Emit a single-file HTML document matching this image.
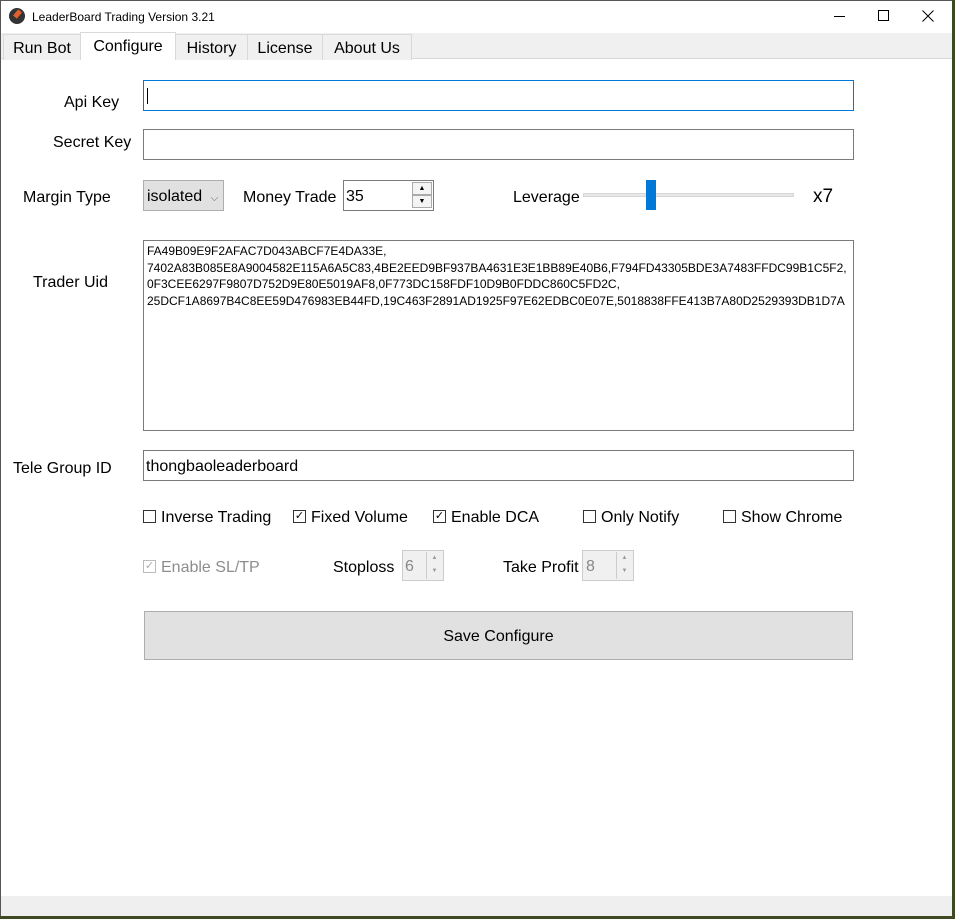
<!DOCTYPE html>
<html><head><meta charset="utf-8"><style>
*{margin:0;padding:0;box-sizing:border-box}
body{width:955px;height:919px;overflow:hidden;background:#3d4a22;font-family:"Liberation Sans",sans-serif;position:relative;color:#000}
.a{position:absolute}
.win{left:0;top:0;width:952px;height:916px;background:#fff;border-left:1px solid #555;border-top:1px solid #555}
.lbl{font-size:16px;white-space:nowrap;margin-top:2px}
.inp{border:1px solid #7a7a7a;background:#fff}
.cb{width:13px;height:13px;border:1px solid #333;background:#fff;font-size:11px;line-height:11px;text-align:center;margin-top:1px}
.tab{top:34px;height:26px;border:1px solid #d9d9d9;border-bottom:none;background:#f0f0f0;font-size:16px;text-align:center;line-height:28px}
</style></head><body>
<div class="a win"></div>
<!-- title -->
<div class="a" style="left:9px;top:8px;width:16px;height:16px;border-radius:50%;background:#333"></div>
<div class="a" style="left:15px;top:10px;width:5px;height:8px;background:#e06030;transform:rotate(40deg)"></div>
<div class="a" style="left:32px;top:10px;font-size:12px">LeaderBoard Trading Version 3.21</div>
<div class="a" style="left:834px;top:16px;width:11px;height:1px;background:#000"></div>
<div class="a" style="left:878px;top:10px;width:11px;height:11px;border:1px solid #000"></div>
<svg class="a" style="left:922px;top:10px" width="12" height="12"><path d="M0.5 0.5L11.5 11.5M11.5 0.5L0.5 11.5" stroke="#000" stroke-width="1"/></svg>
<!-- tab strip -->
<div class="a" style="left:1px;top:33px;width:951px;height:26px;background:#f0f0f0;border-bottom:1px solid #d9d9d9"></div>
<div class="a tab" style="left:3px;width:78px">Run Bot</div>
<div class="a tab" style="left:80px;top:32px;width:96px;height:28px;background:#fff;z-index:2">Configure</div>
<div class="a tab" style="left:175px;width:73px">History</div>
<div class="a tab" style="left:247px;width:76px">License</div>
<div class="a tab" style="left:322px;width:90px">About Us</div>
<!-- api -->
<div class="a lbl" style="left:64px;top:92px">Api Key</div>
<div class="a inp" style="left:143px;top:80px;width:711px;height:31px;border-color:#0078d7"></div>
<div class="a" style="left:147px;top:88px;width:1px;height:16px;background:#000"></div>
<div class="a lbl" style="left:53px;top:132px">Secret Key</div>
<div class="a inp" style="left:143px;top:129px;width:711px;height:31px"></div>
<!-- margin row -->
<div class="a lbl" style="left:23px;top:187px">Margin Type</div>
<div class="a" style="left:143px;top:180px;width:81px;height:31px;background:#e1e1e1;border:1px solid #adadad;font-size:16px;line-height:31px;padding-left:3px">isolated <span style="font-size:10px;color:#666;margin-left:4px">⌵</span></div>
<div class="a lbl" style="left:243px;top:187px">Money Trade</div>
<div class="a inp" style="left:343px;top:180px;width:91px;height:31px;font-size:16px;line-height:31px;padding-left:2px">35</div>
<div class="a" style="left:412px;top:182px;width:20px;height:13px;border:1px solid #aaa;background:#f4f4f4;font-size:7px;text-align:center;line-height:11px">▲</div>
<div class="a" style="left:412px;top:195px;width:20px;height:13px;border:1px solid #aaa;background:#f4f4f4;font-size:7px;text-align:center;line-height:11px">▼</div>
<div class="a lbl" style="left:513px;top:187px">Leverage</div>
<div class="a" style="left:583px;top:193px;width:211px;height:4px;background:#e7e7e7;border:1px solid #d6d6d6"></div>
<div class="a" style="left:646px;top:180px;width:10px;height:30px;background:#0078d7"></div>
<div class="a" style="left:813px;top:186px;font-size:19px">x7</div>
<!-- trader uid -->
<div class="a lbl" style="left:33px;top:272px">Trader Uid</div>
<div class="a inp" style="left:143px;top:240px;width:711px;height:191px;font-size:12px;line-height:16.5px;padding:2px 3px;letter-spacing:0px;white-space:nowrap;overflow:hidden">FA49B09E9F2AFAC7D043ABCF7E4DA33E,<br>7402A83B085E8A9004582E115A6A5C83,4BE2EED9BF937BA4631E3E1BB89E40B6,F794FD43305BDE3A7483FFDC99B1C5F2,<br>0F3CEE6297F9807D752D9E80E5019AF8,0F773DC158FDF10D9B0FDDC860C5FD2C,<br>25DCF1A8697B4C8EE59D476983EB44FD,19C463F2891AD1925F97E62EDBC0E07E,5018838FFE413B7A80D2529393DB1D7A</div>
<!-- tele -->
<div class="a lbl" style="left:13px;top:458px">Tele Group ID</div>
<div class="a inp" style="left:143px;top:450px;width:711px;height:31px;font-size:16px;line-height:31px;padding-left:2px">thongbaoleaderboard</div>
<!-- checkboxes -->
<div class="a cb" style="left:143px;top:509px"></div><div class="a lbl" style="left:161px;top:507px">Inverse Trading</div>
<div class="a cb" style="left:293px;top:509px">✓</div><div class="a lbl" style="left:311px;top:507px">Fixed Volume</div>
<div class="a cb" style="left:433px;top:509px">✓</div><div class="a lbl" style="left:451px;top:507px">Enable DCA</div>
<div class="a cb" style="left:583px;top:509px"></div><div class="a lbl" style="left:601px;top:507px">Only Notify</div>
<div class="a cb" style="left:723px;top:509px"></div><div class="a lbl" style="left:741px;top:507px">Show Chrome</div>
<!-- sl/tp -->
<div class="a cb" style="left:143px;top:559px;border-color:#bbb;color:#aaa">✓</div><div class="a lbl" style="left:161px;top:557px;color:#8d8d8d">Enable SL/TP</div>
<div class="a lbl" style="left:333px;top:557px">Stoploss</div>
<div class="a" style="left:402px;top:550px;width:42px;height:31px;border:1px solid #ccc;background:#f0f0f0;font-size:16px;line-height:31px;padding-left:2px;color:#888">6</div>
<div class="a" style="left:426px;top:552px;width:16px;height:27px;border-left:1px solid #ccc;font-size:6px;color:#999;text-align:center;line-height:13px">▲<br>▼</div>
<div class="a lbl" style="left:503px;top:557px">Take Profit</div>
<div class="a" style="left:582px;top:550px;width:52px;height:31px;border:1px solid #ccc;background:#f0f0f0;font-size:16px;line-height:31px;padding-left:3px;color:#888">8</div>
<div class="a" style="left:616px;top:552px;width:16px;height:27px;border-left:1px solid #ccc;font-size:6px;color:#999;text-align:center;line-height:13px">▲<br>▼</div>
<!-- save -->
<div class="a" style="left:144px;top:611px;width:709px;height:49px;background:#e1e1e1;border:1px solid #adadad;font-size:16px;text-align:center;line-height:50px">Save Configure</div>
<!-- status -->
<div class="a" style="left:1px;top:896px;width:951px;height:20px;background:#efefef"></div>
</body></html>
